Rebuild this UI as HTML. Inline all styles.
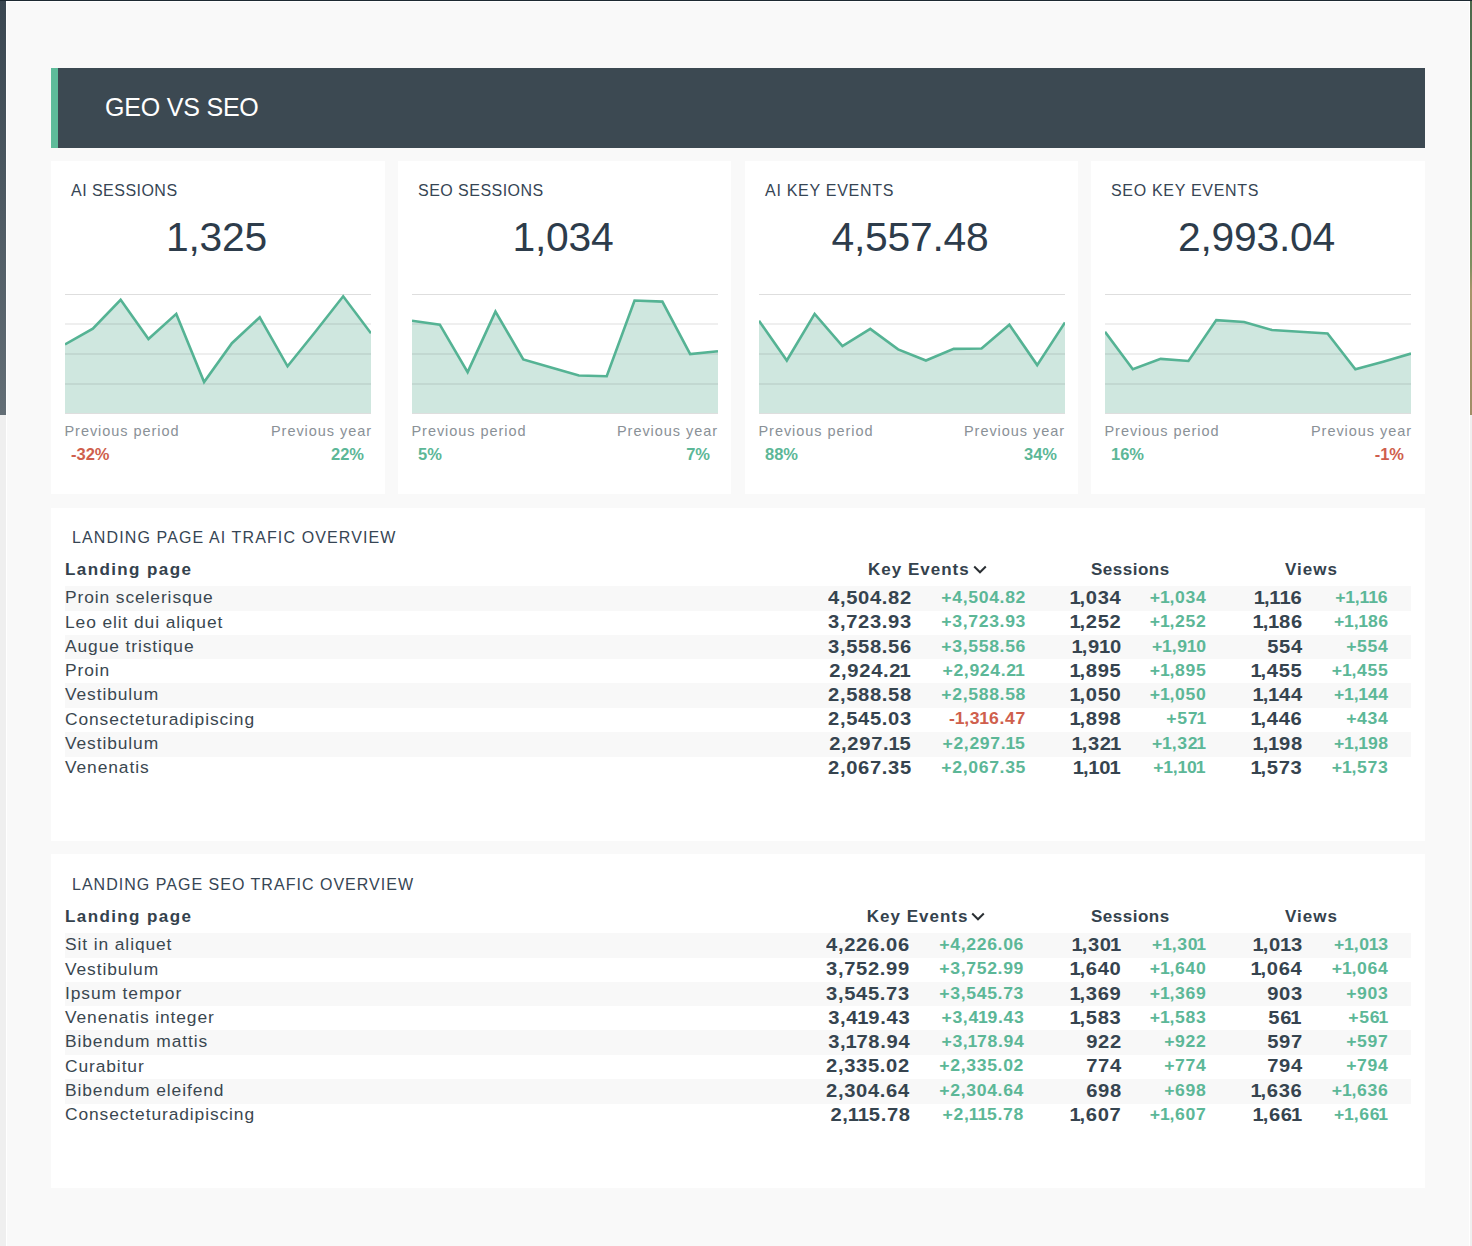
<!DOCTYPE html><html><head><meta charset="utf-8"><title>GEO vs SEO</title><style>*{margin:0;padding:0;box-sizing:border-box}
html,body{width:1472px;height:1246px;overflow:hidden}
body{background:#f9f9f9;position:relative;font-family:"Liberation Sans",sans-serif;color:#2f3e4c}
.lstrip{position:absolute;left:0;top:0;width:6px;height:415px;background:linear-gradient(#3a4751,#636e76)}
.rstrip{position:absolute;right:0;top:0;width:2px;height:415px;background:linear-gradient(#4c684b 0%,#6a895d 50%,#7f8f60 64%,#a7956a 70%,#a18e67 100%)}
body:before{content:"";position:absolute;left:0;top:415px;width:6px;height:831px;background:#efefef}
body:after{content:"";position:absolute;right:0;top:415px;width:2px;height:831px;background:#efefef}
.topline{position:absolute;left:0;top:0;width:1472px;height:1px;background:#1d2932}
.frame{position:absolute;left:6px;top:1px;width:1464px;height:1245px;border:1px solid #ffffff;border-bottom:none}
.hdr{position:absolute;left:51px;top:68px;width:1374px;height:80px;background:#3c4952}
.hdr-bar{position:absolute;left:0;top:0;width:7px;height:80px;background:#5ebb9a}
.hdr-t{position:absolute;left:54px;top:24px;font-size:25px;line-height:30px;color:#fff;letter-spacing:-0.2px}
.kpi{position:absolute;top:161px;height:333px;background:#fff}
.kt{position:absolute;left:20px;top:20px;font-size:16px;line-height:20px;color:#364554;letter-spacing:0.47px}
.kn{position:absolute;left:-1.5px;width:100%;top:53px;text-align:center;font-size:40.8px;line-height:46px;color:#2d3c4b;letter-spacing:-0.25px}
.ch{position:absolute;left:14px;top:133px}
.ar{fill:#cfe7df}
.gl{stroke:rgba(0,0,0,0.13);stroke-width:1}
.gb{stroke:#dedede;stroke-width:1}
.ln{fill:none;stroke:#55b394;stroke-width:2.6;stroke-linejoin:miter}
.pl{position:absolute;left:13.5px;top:260.5px;font-size:14.5px;line-height:18px;color:#8a9197;letter-spacing:0.95px}
.pr{position:absolute;right:13px;top:260.5px;font-size:14.5px;line-height:18px;color:#8a9197;letter-spacing:0.95px}
.vl{position:absolute;left:20px;top:284px;font-size:16.5px;line-height:18px;font-weight:bold}
.vr{position:absolute;right:21px;top:284px;font-size:16.5px;line-height:18px;font-weight:bold}
.pos{color:#5cb797}
.neg{color:#cf5f4d}
.tcard{position:absolute;left:51px;width:1374px;height:334px;background:#fff}
.tt{position:absolute;left:21px;top:20px;font-size:16px;line-height:20px;color:#364554;letter-spacing:1.12px}
.th{position:absolute;top:52px;font-size:17px;line-height:20px;font-weight:bold;color:#34424d;letter-spacing:1.0px}
.th.lp{left:14px;letter-spacing:1.4px}
.th.ke{left:817px}
.th.se{left:1040px;letter-spacing:0.5px}
.th.vi{left:1234px}
.chev{margin-left:3px;vertical-align:1px}
.chev path{fill:none;stroke:#2a2f33;stroke-width:2}
.row{position:absolute;left:14px;width:1346px;height:24.6px;font-size:17.4px;line-height:23px;color:#3a4750}
.row.odd{background:#f8f8f8}
.row span{position:absolute;top:0;white-space:nowrap}
.c0{left:0;letter-spacing:0.9px}
.c1,.c3,.c5{top:0.8px !important;font-weight:bold;color:#36444f;font-size:18px;letter-spacing:0.6px;transform:scaleX(1.12);transform-origin:100% 50%;margin-right:-0.6px}
.c2,.c4,.c6{top:-0.3px !important;font-weight:bold;font-size:16px;letter-spacing:0.6px;transform:scaleX(1.1);transform-origin:100% 50%;margin-right:-0.6px}
.c1{right:500px}
.c2{right:386px}
.c3{right:290px}
.c4{right:205px}
.c5{right:109px}
.c6{right:23px}

.o1{font-weight:inherit;letter-spacing:-1.0px}
.om{font-weight:inherit;margin-left:-0.8px;letter-spacing:-0.2px}
.ol{font-weight:inherit;margin-left:-1.6px}
.t2 .c1{right:501.4px}
.t2 .c2{right:387.4px}
.t2 .th.ke{left:815.8px}
</style></head><body><div class="lstrip"></div><div class="rstrip"></div><div class="topline"></div><div class="frame"></div><div class="hdr"><div class="hdr-bar"></div><div class="hdr-t">GEO VS SEO</div></div><div class="kpi" style="left:51px;width:334px"><div class="kt" style="letter-spacing:0.47px">AI SESSIONS</div><div class="kn">1,325</div><svg class="ch" width="306" height="120" viewBox="0 0 306 120"><path d="M0,119 L0.00,50.40 L27.82,34.60 L55.64,5.80 L83.45,45.00 L111.27,19.90 L139.09,88.00 L166.91,49.20 L194.73,23.30 L222.55,72.30 L250.36,37.70 L278.18,2.30 L306.00,39.30 L306,119 Z" class="ar"/><line x1="0" x2="306" y1="0.5" y2="0.5" class="gl"/><line x1="0" x2="306" y1="30" y2="30" class="gl"/><line x1="0" x2="306" y1="60" y2="60" class="gl"/><line x1="0" x2="306" y1="90" y2="90" class="gl"/><line x1="0" x2="306" y1="119.5" y2="119.5" class="gb"/><polyline points="0.00,50.40 27.82,34.60 55.64,5.80 83.45,45.00 111.27,19.90 139.09,88.00 166.91,49.20 194.73,23.30 222.55,72.30 250.36,37.70 278.18,2.30 306.00,39.30" class="ln"/></svg><div class="pl">Previous period</div><div class="pr">Previous year</div><div class="vl neg">-32%</div><div class="vr pos">22%</div></div><div class="kpi" style="left:398px;width:333px"><div class="kt" style="letter-spacing:0.47px">SEO SESSIONS</div><div class="kn">1,034</div><svg class="ch" width="306" height="120" viewBox="0 0 306 120"><path d="M0,119 L0.00,26.80 L27.82,30.70 L55.64,78.10 L83.45,17.60 L111.27,65.40 L139.09,73.50 L166.91,81.50 L194.73,82.20 L222.55,6.50 L250.36,7.60 L278.18,60.10 L306.00,57.30 L306,119 Z" class="ar"/><line x1="0" x2="306" y1="0.5" y2="0.5" class="gl"/><line x1="0" x2="306" y1="30" y2="30" class="gl"/><line x1="0" x2="306" y1="60" y2="60" class="gl"/><line x1="0" x2="306" y1="90" y2="90" class="gl"/><line x1="0" x2="306" y1="119.5" y2="119.5" class="gb"/><polyline points="0.00,26.80 27.82,30.70 55.64,78.10 83.45,17.60 111.27,65.40 139.09,73.50 166.91,81.50 194.73,82.20 222.55,6.50 250.36,7.60 278.18,60.10 306.00,57.30" class="ln"/></svg><div class="pl">Previous period</div><div class="pr">Previous year</div><div class="vl pos">5%</div><div class="vr pos">7%</div></div><div class="kpi" style="left:745px;width:333px"><div class="kt" style="letter-spacing:0.72px">AI KEY EVENTS</div><div class="kn">4,557.48</div><svg class="ch" width="306" height="120" viewBox="0 0 306 120"><path d="M0,119 L0.00,26.80 L27.82,66.50 L55.64,19.90 L83.45,52.00 L111.27,34.90 L139.09,55.40 L166.91,66.50 L194.73,54.90 L222.55,54.50 L250.36,30.70 L278.18,71.10 L306.00,28.40 L306,119 Z" class="ar"/><line x1="0" x2="306" y1="0.5" y2="0.5" class="gl"/><line x1="0" x2="306" y1="30" y2="30" class="gl"/><line x1="0" x2="306" y1="60" y2="60" class="gl"/><line x1="0" x2="306" y1="90" y2="90" class="gl"/><line x1="0" x2="306" y1="119.5" y2="119.5" class="gb"/><polyline points="0.00,26.80 27.82,66.50 55.64,19.90 83.45,52.00 111.27,34.90 139.09,55.40 166.91,66.50 194.73,54.90 222.55,54.50 250.36,30.70 278.18,71.10 306.00,28.40" class="ln"/></svg><div class="pl">Previous period</div><div class="pr">Previous year</div><div class="vl pos">88%</div><div class="vr pos">34%</div></div><div class="kpi" style="left:1091px;width:334px"><div class="kt" style="letter-spacing:0.69px">SEO KEY EVENTS</div><div class="kn">2,993.04</div><svg class="ch" width="306" height="120" viewBox="0 0 306 120"><path d="M0,119 L0.00,37.70 L27.82,75.30 L55.64,64.90 L83.45,67.00 L111.27,26.10 L139.09,28.00 L166.91,36.00 L194.73,37.70 L222.55,39.50 L250.36,75.30 L278.18,67.70 L306.00,59.60 L306,119 Z" class="ar"/><line x1="0" x2="306" y1="0.5" y2="0.5" class="gl"/><line x1="0" x2="306" y1="30" y2="30" class="gl"/><line x1="0" x2="306" y1="60" y2="60" class="gl"/><line x1="0" x2="306" y1="90" y2="90" class="gl"/><line x1="0" x2="306" y1="119.5" y2="119.5" class="gb"/><polyline points="0.00,37.70 27.82,75.30 55.64,64.90 83.45,67.00 111.27,26.10 139.09,28.00 166.91,36.00 194.73,37.70 222.55,39.50 250.36,75.30 278.18,67.70 306.00,59.60" class="ln"/></svg><div class="pl">Previous period</div><div class="pr">Previous year</div><div class="vl pos">16%</div><div class="vr neg">-1%</div></div><div class="tcard " style="top:508px;height:333px"><div style="position:absolute;left:0;top:0px;width:100%"><div class="tt" style="letter-spacing:1.12px">LANDING PAGE AI TRAFIC OVERVIEW</div><div class="th lp">Landing page</div><div class="th ke">Key Events<svg class="chev" width="14" height="9" viewBox="0 0 14 9"><path d="M1.2,1.5 L7,7.3 L12.8,1.5" /></svg></div><div class="th se">Sessions</div><div class="th vi">Views</div><div class="row odd" style="top:78.200px"><span class="c0">Proin scelerisque</span><span class="c1">4,504.82</span><span class="c2 pos">+4,504.82</span><span class="c3"><b class="o1">1</b>,034</span><span class="c4 pos">+<b class="om">1</b>,034</span><span class="c5"><b class="o1">1</b>,<b class="om">1</b><b class="om">1</b>6</span><span class="c6 pos">+<b class="om">1</b>,<b class="om">1</b><b class="om">1</b>6</span></div><div class="row" style="top:102.500px"><span class="c0">Leo elit dui aliquet</span><span class="c1">3,723.93</span><span class="c2 pos">+3,723.93</span><span class="c3"><b class="o1">1</b>,252</span><span class="c4 pos">+<b class="om">1</b>,252</span><span class="c5"><b class="o1">1</b>,<b class="om">1</b>86</span><span class="c6 pos">+<b class="om">1</b>,<b class="om">1</b>86</span></div><div class="row odd" style="top:126.800px"><span class="c0">Augue tristique</span><span class="c1">3,558.56</span><span class="c2 pos">+3,558.56</span><span class="c3"><b class="o1">1</b>,9<b class="om">1</b>0</span><span class="c4 pos">+<b class="om">1</b>,9<b class="om">1</b>0</span><span class="c5">554</span><span class="c6 pos">+554</span></div><div class="row" style="top:151.100px"><span class="c0">Proin</span><span class="c1">2,924.2<b class="ol">1</b></span><span class="c2 pos">+2,924.2<b class="ol">1</b></span><span class="c3"><b class="o1">1</b>,895</span><span class="c4 pos">+<b class="om">1</b>,895</span><span class="c5"><b class="o1">1</b>,455</span><span class="c6 pos">+<b class="om">1</b>,455</span></div><div class="row odd" style="top:175.400px"><span class="c0">Vestibulum</span><span class="c1">2,588.58</span><span class="c2 pos">+2,588.58</span><span class="c3"><b class="o1">1</b>,050</span><span class="c4 pos">+<b class="om">1</b>,050</span><span class="c5"><b class="o1">1</b>,<b class="om">1</b>44</span><span class="c6 pos">+<b class="om">1</b>,<b class="om">1</b>44</span></div><div class="row" style="top:199.700px"><span class="c0">Consecteturadipiscing</span><span class="c1">2,545.03</span><span class="c2 neg">-<b class="om">1</b>,3<b class="om">1</b>6.47</span><span class="c3"><b class="o1">1</b>,898</span><span class="c4 pos">+57<b class="ol">1</b></span><span class="c5"><b class="o1">1</b>,446</span><span class="c6 pos">+434</span></div><div class="row odd" style="top:224.000px"><span class="c0">Vestibulum</span><span class="c1">2,297.<b class="om">1</b>5</span><span class="c2 pos">+2,297.<b class="om">1</b>5</span><span class="c3"><b class="o1">1</b>,32<b class="ol">1</b></span><span class="c4 pos">+<b class="om">1</b>,32<b class="ol">1</b></span><span class="c5"><b class="o1">1</b>,<b class="om">1</b>98</span><span class="c6 pos">+<b class="om">1</b>,<b class="om">1</b>98</span></div><div class="row" style="top:248.300px"><span class="c0">Venenatis</span><span class="c1">2,067.35</span><span class="c2 pos">+2,067.35</span><span class="c3"><b class="o1">1</b>,<b class="om">1</b>0<b class="ol">1</b></span><span class="c4 pos">+<b class="om">1</b>,<b class="om">1</b>0<b class="ol">1</b></span><span class="c5"><b class="o1">1</b>,573</span><span class="c6 pos">+<b class="om">1</b>,573</span></div></div></div><div class="tcard t2" style="top:854px;height:334px"><div style="position:absolute;left:0;top:1px;width:100%"><div class="tt" style="letter-spacing:1.02px">LANDING PAGE SEO TRAFIC OVERVIEW</div><div class="th lp">Landing page</div><div class="th ke">Key Events<svg class="chev" width="14" height="9" viewBox="0 0 14 9"><path d="M1.2,1.5 L7,7.3 L12.8,1.5" /></svg></div><div class="th se">Sessions</div><div class="th vi">Views</div><div class="row odd" style="top:78.200px"><span class="c0">Sit in aliquet</span><span class="c1">4,226.06</span><span class="c2 pos">+4,226.06</span><span class="c3"><b class="o1">1</b>,30<b class="ol">1</b></span><span class="c4 pos">+<b class="om">1</b>,30<b class="ol">1</b></span><span class="c5"><b class="o1">1</b>,0<b class="om">1</b>3</span><span class="c6 pos">+<b class="om">1</b>,0<b class="om">1</b>3</span></div><div class="row" style="top:102.500px"><span class="c0">Vestibulum</span><span class="c1">3,752.99</span><span class="c2 pos">+3,752.99</span><span class="c3"><b class="o1">1</b>,640</span><span class="c4 pos">+<b class="om">1</b>,640</span><span class="c5"><b class="o1">1</b>,064</span><span class="c6 pos">+<b class="om">1</b>,064</span></div><div class="row odd" style="top:126.800px"><span class="c0">Ipsum tempor</span><span class="c1">3,545.73</span><span class="c2 pos">+3,545.73</span><span class="c3"><b class="o1">1</b>,369</span><span class="c4 pos">+<b class="om">1</b>,369</span><span class="c5">903</span><span class="c6 pos">+903</span></div><div class="row" style="top:151.100px"><span class="c0">Venenatis integer</span><span class="c1">3,4<b class="om">1</b>9.43</span><span class="c2 pos">+3,4<b class="om">1</b>9.43</span><span class="c3"><b class="o1">1</b>,583</span><span class="c4 pos">+<b class="om">1</b>,583</span><span class="c5">56<b class="ol">1</b></span><span class="c6 pos">+56<b class="ol">1</b></span></div><div class="row odd" style="top:175.400px"><span class="c0">Bibendum mattis</span><span class="c1">3,<b class="om">1</b>78.94</span><span class="c2 pos">+3,<b class="om">1</b>78.94</span><span class="c3">922</span><span class="c4 pos">+922</span><span class="c5">597</span><span class="c6 pos">+597</span></div><div class="row" style="top:199.700px"><span class="c0">Curabitur</span><span class="c1">2,335.02</span><span class="c2 pos">+2,335.02</span><span class="c3">774</span><span class="c4 pos">+774</span><span class="c5">794</span><span class="c6 pos">+794</span></div><div class="row odd" style="top:224.000px"><span class="c0">Bibendum eleifend</span><span class="c1">2,304.64</span><span class="c2 pos">+2,304.64</span><span class="c3">698</span><span class="c4 pos">+698</span><span class="c5"><b class="o1">1</b>,636</span><span class="c6 pos">+<b class="om">1</b>,636</span></div><div class="row" style="top:248.300px"><span class="c0">Consecteturadipiscing</span><span class="c1">2,<b class="om">1</b><b class="om">1</b>5.78</span><span class="c2 pos">+2,<b class="om">1</b><b class="om">1</b>5.78</span><span class="c3"><b class="o1">1</b>,607</span><span class="c4 pos">+<b class="om">1</b>,607</span><span class="c5"><b class="o1">1</b>,66<b class="ol">1</b></span><span class="c6 pos">+<b class="om">1</b>,66<b class="ol">1</b></span></div></div></div></body></html>
